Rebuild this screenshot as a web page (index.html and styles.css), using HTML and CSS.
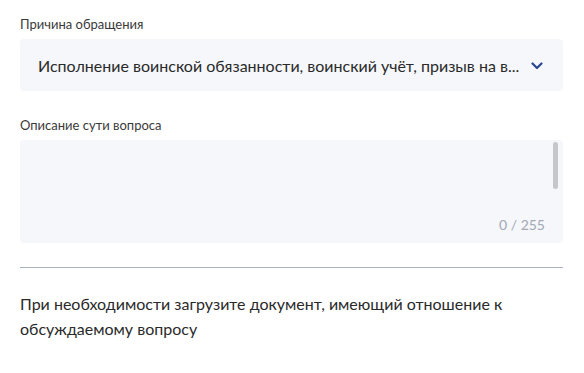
FILE: index.html
```html
<!DOCTYPE html>
<html lang="ru">
<head>
<meta charset="utf-8">
<link rel="stylesheet" href="styles.css">
</head>
<body>
<div class="form">
  <div class="field">
    <div class="label">Причина обращения</div>
    <div class="select">
      <span class="select-text">Исполнение воинской обязанности, воинский учёт, призыв на в...</span>
      <svg class="chevron" width="14" height="10" viewBox="0 0 14 10"><path d="M2.5 2.5 L7 7 L11.5 2.5" fill="none" stroke="#2a4590" stroke-width="2.2" stroke-linecap="round" stroke-linejoin="round"/></svg>
    </div>
  </div>
  <div class="field field-desc">
    <div class="label">Описание сути вопроса</div>
    <div class="textarea">
      <div class="scrollbar"></div>
      <div class="counter">0 / 255</div>
    </div>
  </div>
  <hr class="divider">
  <p class="note">При необходимости загрузите документ, имеющий отношение к обсуждаемому вопросу</p>
</div>
</body>
</html>
```
FILE: styles.css
```css
* { box-sizing: border-box; }
html, body { margin: 0; padding: 0; background: #fff; }
body { font-family: Lato, "Noto Sans", sans-serif; color: #2a2a2a; }
.form { padding: 16px 21px 0 20px; width: 584px; }
.label { font-size: 13px; line-height: 16px; color: #3a3a3a; margin-bottom: 7px; }
.select {
  height: 52px; background: #f5f7fa; border-radius: 4px;
  display: flex; align-items: center; justify-content: space-between;
  padding: 0 19px 0 18px;
}
.select-text { font-size: 16px; color: #2a2a2a; white-space: nowrap; }
.chevron { display: block; margin-top: 2px; }
.field-desc { margin-top: 26px; }
.field-desc .label { margin-bottom: 7px; }
.textarea {
  position: relative; height: 103px; background: #f5f7fa; border-radius: 4px;
  display: flex; align-items: flex-end; justify-content: flex-end;
  padding: 0 18px 9px 0;
}
.scrollbar {
  position: absolute; top: 2px; right: 5px; width: 5px; height: 47px;
  background: #c6c7cb; border-radius: 3px;
}
.counter { font-size: 14px; color: #a3a9b6; line-height: 18px; }
.divider { border: 0; border-top: 1px solid #a9b3bf; margin: 24px 0 0 0; }
.note { margin: 23px 0 0 0; font-size: 16px; line-height: 25px; color: #2a2a2a; max-width: 510px; }
```
